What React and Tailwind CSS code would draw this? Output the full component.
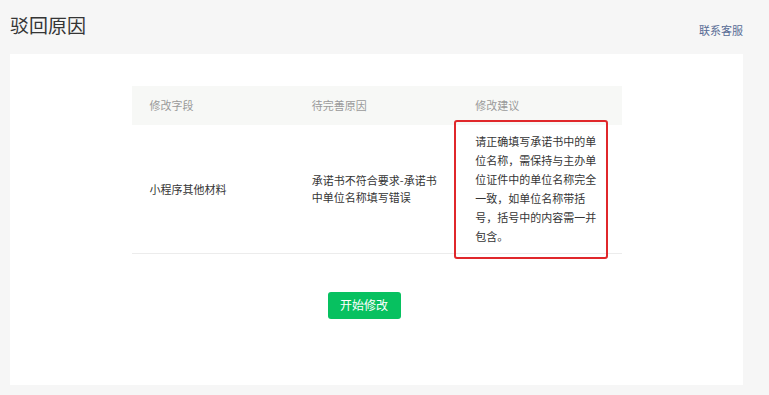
import React from "react";

const rows = [
  {
    field: "小程序其他材料",
    reason: "承诺书不符合要求-承诺书中单位名称填写错误",
    advice:
      "请正确填写承诺书中的单位名称，需保持与主办单位证件中的单位名称完全一致，如单位名称带括号，括号中的内容需一并包含。",
  },
];

export default function App() {
  return (
    <div
      className="min-h-[395px] bg-[#f6f6f6] px-[10px] pt-[10px] pb-[12px]"
      style={{ fontFamily: '"Noto Sans CJK SC", "Noto Sans", sans-serif' }}
    >
      <header className="flex items-end justify-between pr-[16px]">
        <h1 className="text-[19px] leading-[30px] font-normal text-[#353535]">驳回原因</h1>
        <a className="mb-[2px] text-[11px] leading-[16px] text-[#576b95]">联系客服</a>
      </header>

      <main className="mt-[14px] w-[733px] bg-white pt-[32px] pb-[66px]">
        <table className="mx-auto w-[490px] table-fixed text-left text-[11px]">
          <thead>
            <tr className="h-[39px] bg-[#f7f8f6] text-[#9a9a9a]">
              <th className="pl-[18px] font-normal">修改字段</th>
              <th className="pl-[17px] font-normal">待完善原因</th>
              <th className="pl-[17px] font-normal">修改建议</th>
            </tr>
          </thead>
          <tbody>
            {rows.map((row) => (
              <tr key={row.field} className="h-[128px] border-b border-[#ececec] text-[#353535]">
                <td className="pl-[18px] align-middle">{row.field}</td>
                <td className="pl-[17px] pr-[16px] align-middle leading-[17px]">{row.reason}</td>
                <td className="relative pl-[17px] pr-[20px] align-middle leading-[19px]">
                  {row.advice}
                  <span className="absolute left-[-4px] top-[-5px] h-[139px] w-[154px] rounded-[3px] border-2 border-[#e0272b]" />
                </td>
              </tr>
            ))}
          </tbody>
        </table>

        <div className="mt-[38px] flex justify-center pr-[25px]">
          <button className="h-[27px] w-[73px] rounded-[3px] bg-[#07c160] text-[12px] text-white">
            开始修改
          </button>
        </div>
      </main>
    </div>
  );
}
